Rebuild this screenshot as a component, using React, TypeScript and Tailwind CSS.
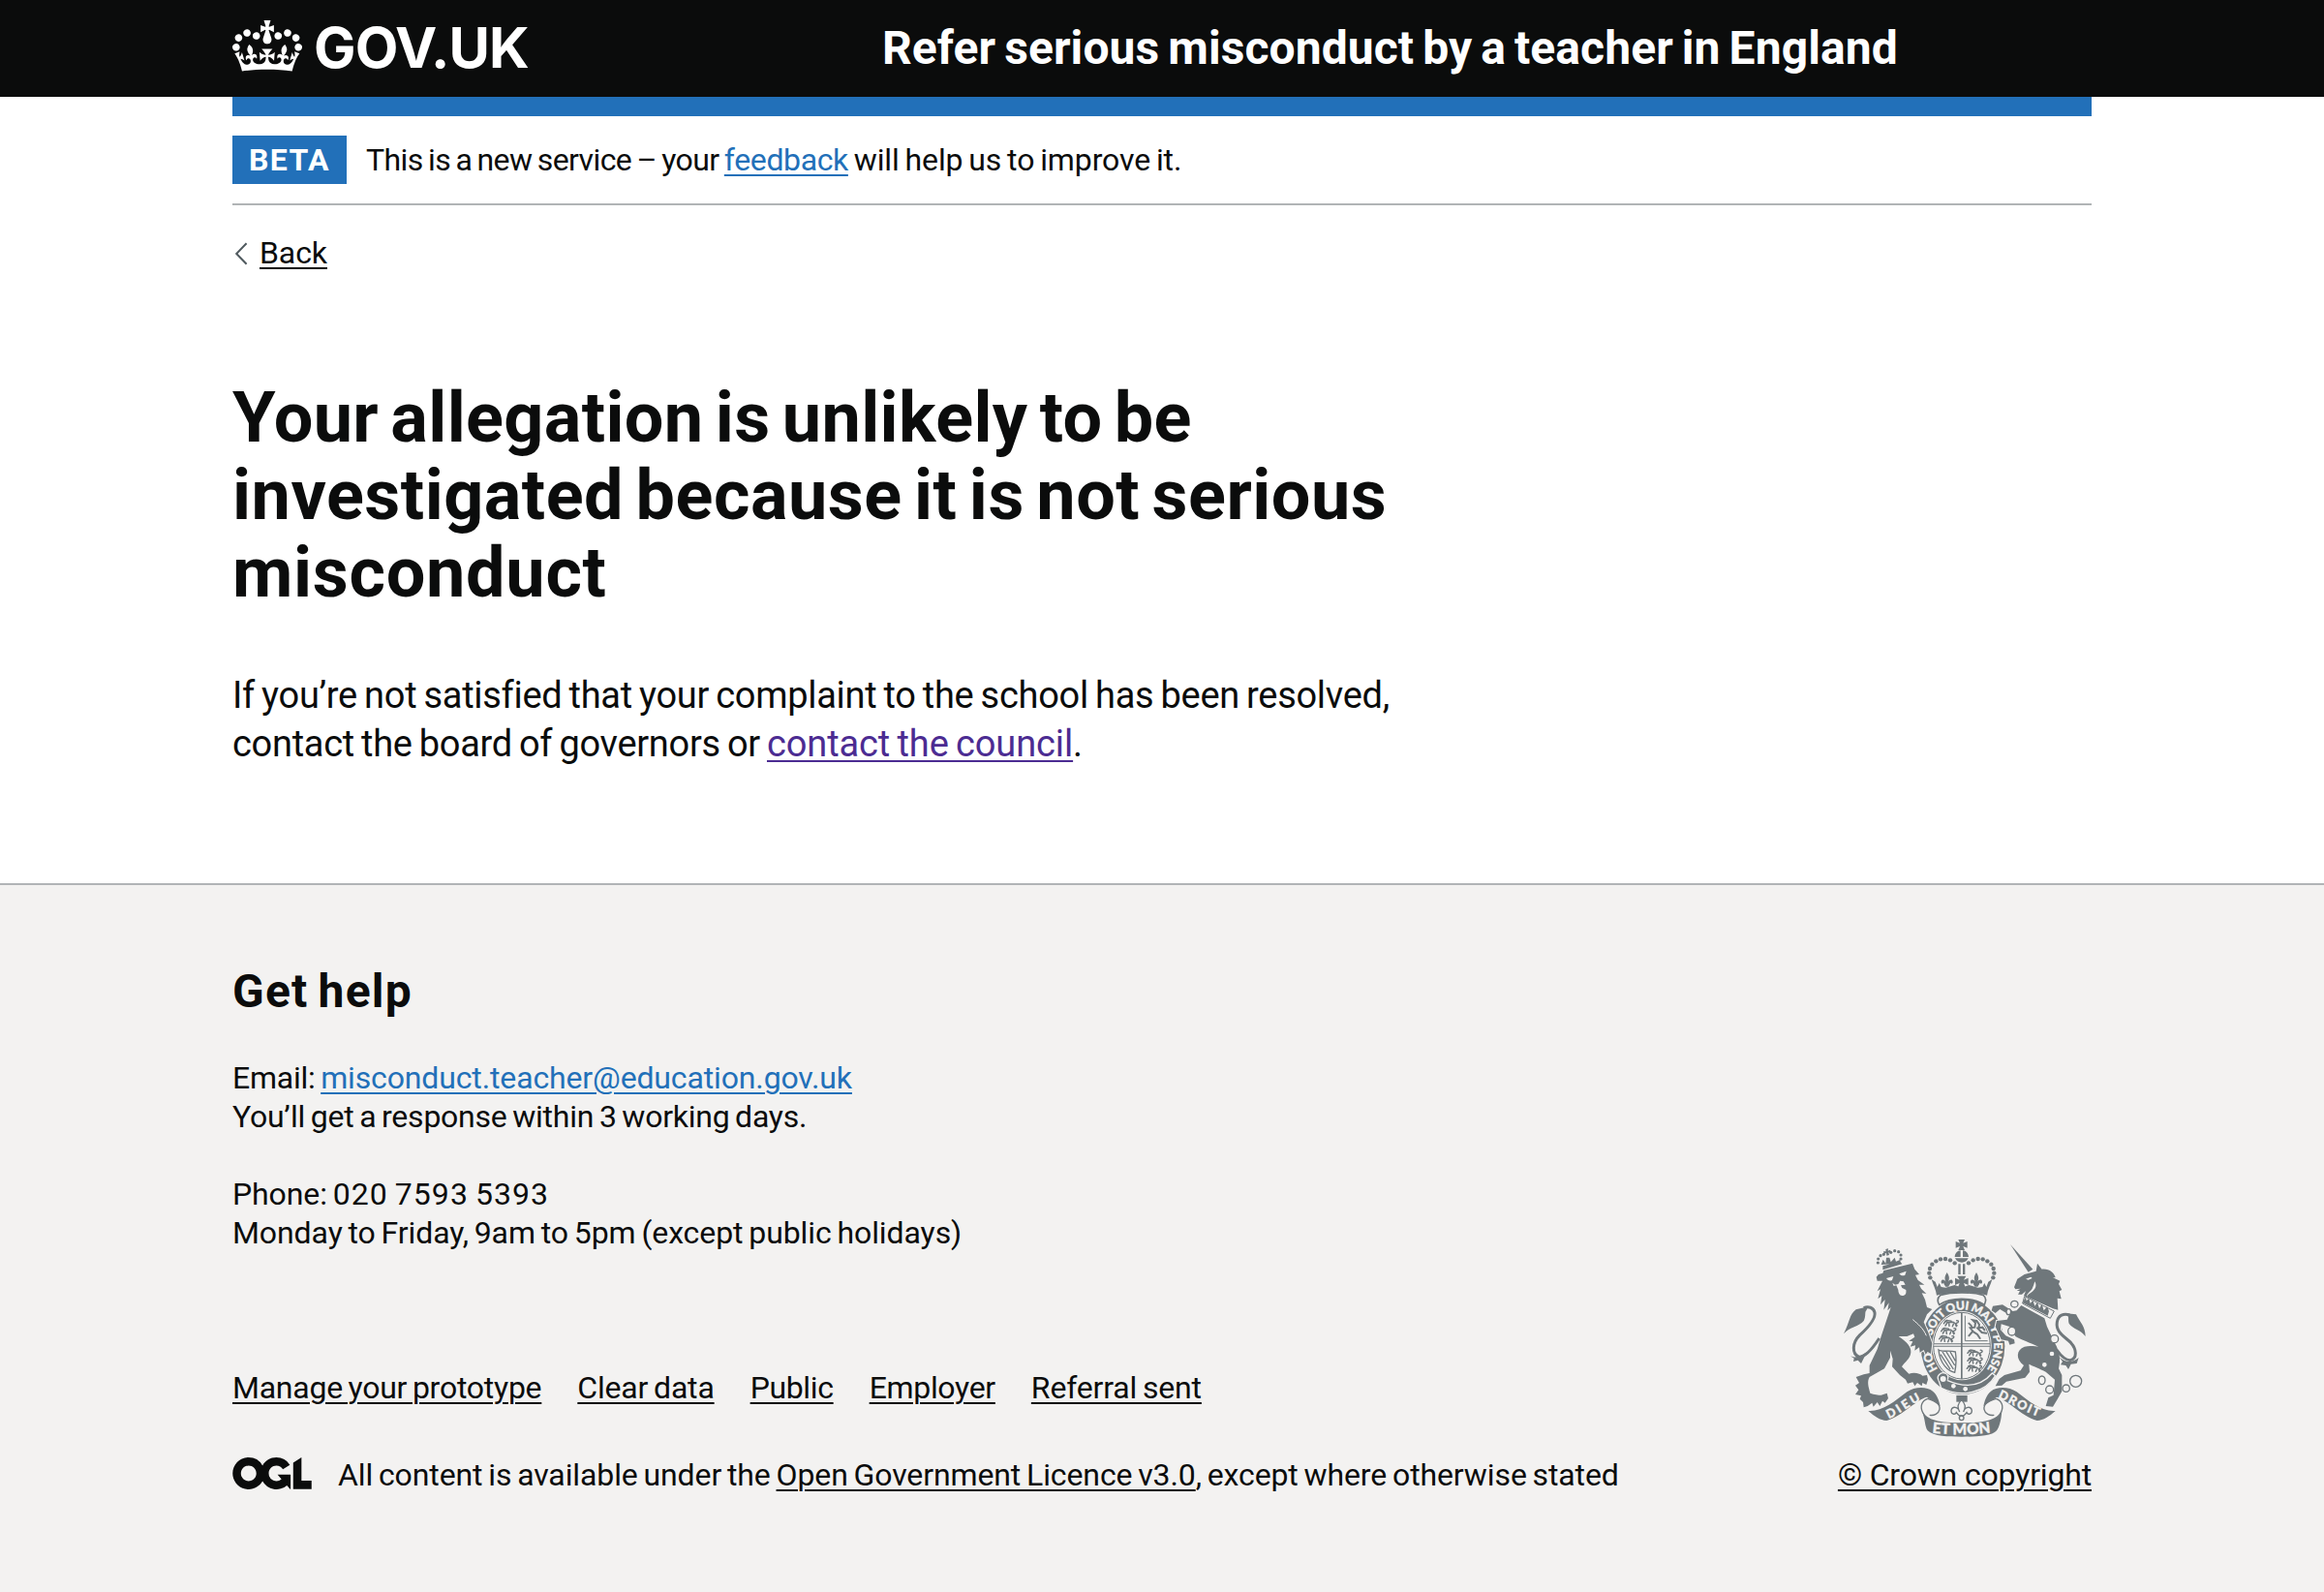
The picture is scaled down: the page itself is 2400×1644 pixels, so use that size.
import type { ReactNode } from "react";

const LINK = "underline decoration-2 underline-offset-4";
const INK = "#6f777b";
const PAPER = "#f3f2f1";

function Crown() {
  return (
    <svg viewBox="0 0 132 97" className="h-[53px] w-[72px] shrink-0" fill="currentColor" aria-hidden="true">
      <path d="M25 30.2c3.5 1.5 7.7-.2 9.1-3.7 1.5-3.6-.2-7.8-3.9-9.2-3.6-1.4-7.6.3-9.1 3.9-1.4 3.5.3 7.5 3.9 9zM9 39.5c3.6 1.5 7.8-.2 9.2-3.7 1.5-3.6-.2-7.8-3.9-9.1-3.6-1.5-7.6.2-9.1 3.8-1.4 3.5.3 7.5 3.8 9zM4.4 57.2c3.5 1.5 7.7-.2 9.1-3.8 1.5-3.6-.2-7.7-3.9-9.1-3.5-1.5-7.6.3-9.1 3.8-1.4 3.5.3 7.6 3.9 9.1zm38.3-21.4c3.5 1.5 7.7-.2 9.1-3.8 1.5-3.6-.2-7.7-3.9-9.1-3.6-1.5-7.6.3-9.1 3.8-1.3 3.6.4 7.7 3.9 9.1zm64.4-5.6c-3.6 1.5-7.8-.2-9.1-3.7-1.5-3.6.2-7.8 3.8-9.2 3.6-1.4 7.7.3 9.2 3.9 1.3 3.5-.4 7.5-3.9 9zm15.9 9.3c-3.6 1.5-7.7-.2-9.1-3.7-1.5-3.6.2-7.8 3.7-9.1 3.6-1.5 7.7.2 9.2 3.8 1.5 3.5-.3 7.5-3.8 9zm4.7 17.7c-3.6 1.5-7.8-.2-9.2-3.8-1.5-3.6.2-7.7 3.9-9.1 3.6-1.5 7.7.3 9.2 3.8 1.3 3.5-.4 7.6-3.9 9.1zM89.3 35.8c-3.6 1.5-7.8-.2-9.2-3.8-1.4-3.6.2-7.7 3.9-9.1 3.6-1.5 7.7.3 9.2 3.8 1.4 3.6-.3 7.7-3.9 9.1zM69.7 17.7l8.9 4.7V9.3l-8.9 2.8c-.2-.3-.5-.6-.9-.9L72.4 0H59.6l3.5 11.2c-.3.3-.6.5-.9.9l-8.8-2.8v13.1l8.8-4.7c.3.3.6.7.9.9l-5 15.4v.1c-.2.8-.4 1.6-.4 2.4 0 4.1 3.1 7.5 7 8.1h.2c.3 0 .7.1 1 .1.4 0 .7 0 1-.1h.2c4-.6 7.1-4.1 7.1-8.1 0-.8-.1-1.7-.4-2.4V34l-5.1-15.4c.4-.2.7-.6 1-.9zM66 92.8c16.9 0 32.8 1.1 47.1 3.2 4-16.9 8.9-26.7 14-33.5l-9.6-3.4c1 4.9 1.1 7.2 0 10.2-1.5-1.4-3-4.3-4.2-8.7L108.6 76c2.8-2 5-3.2 7.5-3.3-4.4 9.4-10 11.9-13.6 11.2-4.3-.8-6.3-4.6-5.6-7.9 1-4.7 5.7-5.9 8-.5 4.3-8.7-3-11.4-7.6-8.8 7.1-7.2 7.9-13.5 2.1-21.1-8 6.1-8.1 12.3-4.5 20.8-4.7-5.4-12.1-2.5-9.5 6.2 3.4-5.2 7.9-2 7.2 3.1-.6 4.3-6.4 7.8-13.5 7.2-10.3-.9-10.9-8-11.2-13.8 2.5-.5 7.1 1.8 11 7.3L80.2 60c-4.1 4.4-8 5.3-12.3 5.4 1.4-4.4 8-11.6 8-11.6H55.5s6.4 7.2 7.9 11.6c-4.2-.1-8-1-12.3-5.4l1.4 16.4c3.9-5.5 8.5-7.7 10.9-7.3-.3 5.8-.9 12.8-11.1 13.8-7.2.6-12.9-2.9-13.5-7.2-.7-5 3.8-8.3 7.1-3.1 2.7-8.7-4.6-11.6-9.4-6.2 3.7-8.5 3.6-14.7-4.6-20.8-5.8 7.6-5 13.9 2.2 21.1-4.7-2.6-11.9.1-7.7 8.8 2.3-5.5 7.1-4.2 8.1.5.7 3.3-1.3 7.1-5.7 7.9-3.5.7-9-1.8-13.5-11.2 2.5.1 4.7 1.3 7.5 3.3l-4.7-15.4c-1.2 4.4-2.7 7.2-4.3 8.7-1.1-3-.9-5.3 0-10.2l-9.5 3.4c5 6.9 9.9 16.7 14 33.5 14.8-2.1 30.8-3.2 47.7-3.2z" />
    </svg>
  );
}

function OglLogo() {
  return (
    <svg viewBox="0 0 483.2 195.7" className="mt-0.5 h-[33px] w-[82px] shrink-0" fill="currentColor" role="img" aria-label="OGL">
      <path d="M421.5 142.8V.1l-50.7 32.3v161.1h112.4v-50.7zm-122.3-9.6A47.12 47.12 0 0 1 221 97.8c0-26 21.1-47.1 47.1-47.1 16.7 0 31.4 8.7 39.7 21.8l42.7-27.2A97.63 97.63 0 0 0 268.1 0c-36.5 0-68.3 20.1-85.1 49.7A98 98 0 0 0 97.8 0C43.9 0 0 43.9 0 97.8s43.9 97.8 97.8 97.8c36.5 0 68.3-20.1 85.1-49.7a97.76 97.76 0 0 0 149.6 25.4l19.4 22.2h3v-87.8h-80l24.3 27.5zM97.8 145c-26 0-47.1-21.1-47.1-47.1s21.1-47.1 47.1-47.1 47.1 21.1 47.1 47.1S123.8 145 97.8 145" />
    </svg>
  );
}

const CROWN_DOTS = [
  [386, 103], [372, 94], [357, 90], [342, 91], [328, 97], [316, 107], [309, 120], [307, 134], [310, 148],
];

function Fleur({ x, y, s = 1 }: { x: number; y: number; s?: number }) {
  return (
    <path
      transform={`translate(${x} ${y}) scale(${s})`}
      d="M0-24C8-12 9-4 4 6 8-2 18-4 19 6 20 12 14 15 11 10 10 16 6 18 5 22H-5C-6 18-10 16-11 10-14 15-20 12-19 6-18-4-8-2-4 6-9-4-8-12 0-24Z"
    />
  );
}

function PassantLion({ x, y }: { x: number; y: number }) {
  return (
    <path
      transform={`translate(${x} ${y})`}
      fill="none"
      stroke={INK}
      strokeWidth="4.4"
      strokeLinecap="round"
      d="M2 10l6-7 7 4 16-1 8 5 4 6M12 9l-5 8M18 10l1 8M32 12l-3 7M38 12l3 7M42 9c8-2 6-9 0-8M6 3l6-3M15 1l10 2"
    />
  );
}

function RibbonHalf() {
  return (
    <>
      <path d="M118 561C160 564 200 532 238 502C262 485 300 485 318 500C332 512 338 530 341 547C330 533 312 528 300 518C270 524 224 576 175 591C154 590 138 578 118 561Z" />
      <path
        fill="none"
        stroke={INK}
        strokeWidth="4"
        d="M302 523C284 530 278 545 286 564C294 582 308 592 326 596M302 523C322 530 342 538 339 556C336 570 322 576 308 574"
      />
    </>
  );
}

function CoatOfArms() {
  return (
    <svg viewBox="42 27 750 612" className="h-[204px] w-[250px] overflow-visible" fill={INK} aria-hidden="true">
      <defs>
        <path id="garter" d="M410 473A98 113 0 0 1 410 247A98 113 0 0 1 410 473" />
        <path id="dieu" d="M181 585C212 573 242 547 292 522" />
        <path id="droit" d="M519 520C560 537 596 563 656 583" />
        <path id="etmon" d="M316 629Q408 640 504 627" />
      </defs>

      {/* imperial crown */}
      <path d="M397 30h20l-5 11 13-5v20l-13-5 5 12h-20l5-12-13 5V36l13 5Z" />
      <path d="M404 64v20h-18C387 72 394 65 404 64ZM411 64v20h18C428 72 421 65 411 64ZM387 88h41c-3 8-11 13-20 13s-18-5-21-13Z" />
      {CROWN_DOTS.map(([x, y]) => (
        <g key={x}>
          <circle cx={x} cy={y} r="6.6" />
          <circle cx={815 - x} cy={y} r="6.6" />
        </g>
      ))}
      <path d="M397 106h7v32h-7zM411 106h7v32h-7z" />
      <path d="M394 143h27l-7 12 14-6v22l-14-6 6 16h-25l6-16-14 6v-22l14 6Z" />
      <Fleur x={362} y={155} s={0.95} />
      <Fleur x={453} y={155} s={0.95} />
      <path d="M314 153l12 8 6 16 6-12 6 12 14 2 28-8 22 8 22-8 28 8 14-2 6-12 6 12 6-16 12-8c-4 16-14 32-16 50-40-12-116-12-156 0-2-18-12-34-16-50Z" />

      {/* garter */}
      <ellipse cx="411" cy="361" rx="130" ry="149" />
      <path d="M342 202C376 192 440 192 474 202C486 212 482 222 478 232C440 208 374 208 338 232C332 222 330 212 342 202Z" fill={PAPER} stroke={INK} strokeWidth="5" />
      <ellipse cx="408" cy="359" rx="92" ry="107" fill={PAPER} />
      <ellipse cx="408" cy="359" rx="88" ry="103" fill="none" stroke={INK} strokeWidth="3" />
      <g fill={PAPER} stroke={PAPER} fontFamily="Lato" fontWeight="900" fontSize="36">
        <text>
          <textPath href="#garter" startOffset="198" textLength="376" lengthAdjust="spacing">SOIT QUI MAL Y PENSE</textPath>
        </text>
        <text>
          <textPath href="#garter" startOffset="90">HO</textPath>
        </text>
      </g>

      {/* shield quarters */}
      <path d="M405 256h5v206h-5zM321 352h174v3H321zM321 359h174v3H321z" />
      <PassantLion x={350} y={280} />
      <PassantLion x={342} y={304} />
      <PassantLion x={336} y={328} />
      <PassantLion x={424} y={372} />
      <PassantLion x={424} y={396} />
      <PassantLion x={422} y={420} />
      <g fill="none" stroke={INK} strokeWidth="4">
        <path d="M418 266v78h70" strokeWidth="3" />
        <path d="M430 328l12-14-8-10 14-2 2-14-8-8 12 2 8 12-2 10 12-2 6 8M444 316l12 8 8 12M456 304l14 14 14 2M430 290l8 8" strokeWidth="6" strokeLinecap="round" />
        <path d="M336 372c10 8 30 0 52 6 4 24 2 44-2 64-20-4-46-26-50-70ZM348 378l34 54M360 378l26 42M372 378l16 28M342 386l30 46" />
      </g>

      {/* garter buckle and strap */}
      <path d="M336 466c-8-14 6-26 20-22 10 4 12 14 6 22 60 26 108 16 140-22l10 8c-30 52-104 70-168 38Z" stroke={PAPER} strokeWidth="4" />
      <circle cx="350" cy="462" r="11" fill={PAPER} stroke={INK} strokeWidth="4" />
      <circle cx="382" cy="484" r="7" fill={PAPER} />
      <circle cx="419" cy="493" r="7" fill={PAPER} />

      {/* lion */}
      <path stroke={PAPER} strokeWidth="6" paintOrder="stroke" d="M143 146L150 138L163 134L166 126L255 104L262 122L276 138L264 140L272 156L292 170L276 170L282 182L298 198L284 196L294 216L300 240L316 246L300 262L290 286L304 318L316 352L312 384L302 378L296 386L290 372L278 380L276 364L262 374L264 358L248 362L256 346L244 344L262 332L258 322L238 330L212 330C236 346 252 362 250 380C248 400 232 408 222 424L244 446C262 440 280 446 286 452L300 450L303 464L298 480L286 474L284 484L270 474L262 484L256 472L240 476L234 464L216 450L192 424L194 400L186 374L186 396L168 430L122 456C114 470 118 484 124 506C136 510 150 512 158 512L176 506L180 522L170 536L162 530L154 546L146 534L134 548L130 536L116 546L104 550L102 534L92 524L96 514L78 510L88 496L78 482L90 474L80 456L104 448L122 444L122 420L146 370L158 330L188 240L178 250L182 226L166 248L170 216L156 232L160 204L148 214L156 184L146 190L162 158L146 158Z" />
      <path fill={PAPER} d="M174 150l22-6-4 12c-8 4-14 0-18-6ZM214 136l22-8-4 12c-6 4-14 2-18-4ZM193 164l8 6 10-2 6-10 10 2 6 10-14 2 4 8 12 6c2 14-4 18-12 18s-12-10-12-18l-6-14-8 2Z" />
      <path fill="none" stroke={PAPER} strokeWidth="3" d="M256 278c16 14 32 26 42 50" />
      <path d="M163 112l54-14 6 8-60 18ZM158 108l6-16 8 12 2-18h10l4 14 12-14 4 12 14-6-2 12Z" />
      {[[148, 102], [149, 90], [156, 80], [166, 76], [188, 70], [200, 65], [212, 68], [219, 78], [219, 90]].map(([x, y]) => (
        <circle key={`${x}-${y}`} cx={x} cy={y} r="4.8" />
      ))}
      <path d="M172 60l8-2-1 7 7-3 2 8-7 0 2 8-8 2-1-8-7 3-2-8 8 0Z" />
      <path fill="none" stroke={INK} strokeWidth="9" d="M152 336C130 370 110 394 90 394C66 384 68 350 92 326C118 302 142 276 138 256C134 240 118 236 104 242" />
      <path d="M118 238L80 247C58 264 62 284 42 322C60 300 90 300 104 282C112 268 106 256 112 250ZM58 388C75 400 90 394 114 378L96 414L86 404L72 408L74 398Z" />

      {/* unicorn */}
      <path d="M558 45L628 122L614 131Z" />
      <path d="M570 178L580 152L602 138L638 128L642 104L656 122C680 120 694 134 698 148L690 148L712 158L708 168L718 186L710 190L716 214L704 212L706 248L690 244L600 204L606 190L594 200L582 200L588 190L578 188L590 182L574 184Z" />
      <path fill={PAPER} d="M606 152l16-6 4 4-12 5ZM634 160c8 14 2 28-20 40l-4 6c-2-8 10-14 16-24 4-8 6-16 8-22Z" />
      <path fill={PAPER} stroke={INK} strokeWidth="3" d="M602 206L596 228L682 274L694 252Z" />
      <path d="M606 208l2 12 8-8 4 16 8-10 6 18 8-12 6 20 8-14 6 20 10-12 6 14-4 14-78-40Z" />
      <path stroke={PAPER} strokeWidth="6" paintOrder="stroke" d="M592 234L664 274L672 300L696 350C712 380 714 400 708 430L718 450L718 500L704 525L690 548L668 546L676 520L692 512L696 464L668 440C650 430 628 422 616 416L618 440L604 458L546 470L532 482L512 484L524 462L540 450L590 436L600 420C574 400 576 372 602 362C620 358 640 362 646 362C620 350 590 340 574 330L556 300L530 292L528 310L544 328L570 340L572 352L556 356L552 344L530 340L512 300L516 282L548 278L556 262L542 256L526 246L512 258L500 250L504 236L534 232L566 252L578 250Z" />
      <g fill={PAPER} stroke={INK} strokeWidth="4">
        <ellipse cx="571" cy="230" rx="11" ry="10" />
        <ellipse cx="553" cy="254" rx="7" ry="9" />
        <ellipse cx="563" cy="314" rx="12" ry="13" />
        <circle cx="695" cy="338" r="12" />
        <circle cx="687" cy="384" r="9" />
        <circle cx="664" cy="418" r="9" />
        <ellipse cx="656" cy="466" rx="10" ry="13" />
        <circle cx="680" cy="495" r="12" />
        <circle cx="731" cy="491" r="11" />
        <circle cx="761" cy="469" r="18" />
      </g>
      <path fill="none" stroke={INK} strokeWidth="9" d="M702 372C716 392 728 404 744 404C766 398 764 370 746 350C726 330 698 318 703 286C706 264 724 258 742 264" />
      <path d="M732 259L762 262C776 290 790 298 791 330C776 308 752 308 740 290C736 278 742 272 732 259ZM708 392C730 414 750 412 770 396L764 414L746 416L738 432L730 420L714 418L720 408Z" />

      {/* motto ribbon */}
      <RibbonHalf />
      <g transform="translate(816 0) scale(-1 1)">
        <RibbonHalf />
      </g>
      <path d="M284 560C300 590 340 598 408 598C476 598 516 590 532 560C530 590 524 610 516 622C500 640 450 641 408 641C366 641 320 640 302 622C292 606 296 590 284 560Z" />
      <g fill={PAPER} stroke={PAPER} fontFamily="Lato" fontWeight="900">
        <text fontSize="38"><textPath href="#dieu" textLength="116">DIEU</textPath></text>
        <text fontSize="38"><textPath href="#droit" textLength="138">DROIT</textPath></text>
        <text fontSize="46"><textPath href="#etmon" textLength="182">ET MON</textPath></text>
      </g>

      {/* badge under the shield */}
      <path d="M391 513h34v20h-34z" />
      <g fill={PAPER} stroke={INK} strokeWidth="4">
        <path d="M407 526c12 14 14 22 6 38 4-16 24-20 26-4 0 12-12 14-16 6-4 6-8 8-10 10h-12c-2-2-6-4-10-10-4 8-16 6-16-6 2-16 22-12 26 4-8-16-6-24 6-38Z" />
        <circle cx="407" cy="583" r="7" />
      </g>
    </svg>
  );
}

function FooterLink({ children, className }: { children: ReactNode; className: string }) {
  return (
    <li>
      <a href="#" className={`${LINK} ${className}`}>{children}</a>
    </li>
  );
}

export default function App() {
  return (
    <div className="flex min-h-[1644px] flex-col bg-white font-[Roboto,'Liberation_Sans',sans-serif] text-[32px]/[40px] text-[#0b0c0c] [word-spacing:-2px]">
      <header className="h-[100px] bg-[#0b0c0c] text-white">
        <div className="mx-auto flex w-[1920px]">
          <a href="#" className="flex w-[671px] items-start pt-[21px]">
            <Crown />
            <span className="ml-3 mt-[-2px] font-[Inter,sans-serif] text-[58px]/[60px] font-bold tracking-[-0.9px]">GOV.UK</span>
          </a>
          <a href="#" className="pt-5 text-[48px]/[60px] font-bold tracking-[0.08px] [word-spacing:-3px]">
            Refer serious misconduct by a teacher in England
          </a>
        </div>
      </header>

      <div className="mx-auto w-[1920px]">
        <div className="h-5 bg-[#2270b9]" />
        <div className="flex border-b-2 border-[#b1b4b6] pt-5 pb-5">
          <strong className="flex h-[50px] w-[118px] items-center justify-center bg-[#2270b9] font-bold tracking-[1.4px] text-white">BETA</strong>
          <p className="ml-5 mt-[5px] whitespace-pre">
            <span className="tracking-[-0.6px]">This is a new service – your </span>
            <a href="#" className={`${LINK} tracking-[-0.38px] text-[#2270b9]`}>feedback</a>
            <span className="tracking-[-0.1px]"> will help us to improve it.</span>
          </p>
        </div>
        <a href="#" className="mt-[29px] flex w-fit items-center">
          <svg viewBox="0 0 14 24" className="ml-0.5 mt-0.5 h-6 w-3.5" fill="none" stroke="#505a5f" strokeWidth="2">
            <path d="M12.6 1.2L2.2 12l10.4 10.8" />
          </svg>
          <span className={`${LINK} ml-3 tracking-[-0.08px]`}>Back</span>
        </a>

        <main className="h-[631px] w-[1260px] pt-[111px]">
          <h1 className="text-[72px]/[80px] font-bold [word-spacing:-6px]">
            <span className="tracking-[0.36px]">Your allegation is unlikely to be</span>
            <br />
            <span className="tracking-[0.5px]">investigated because it is not serious</span>
            <br />
            <span className="tracking-[0.7px]">misconduct</span>
          </h1>
          <p className="mt-[61px] text-[38px]/[50px]">
            <span className="tracking-[-0.29px]">If you’re not satisfied that your complaint to the school has been resolved,</span>
            <br />
            <span className="tracking-[-0.3px]">contact the board of governors or </span>
            <a href="#" className={`${LINK} tracking-[-0.11px] text-[#4c2c92]`}>contact the council</a>.
          </p>
        </main>
      </div>

      <footer className="flex-1 border-t-2 border-[#b1b4b6] bg-[#f3f2f1] pt-20">
        <div className="mx-auto flex w-[1920px] items-end justify-between">
          <div>
            <h2 className="text-[48px]/[60px] font-bold tracking-[1.2px] [word-spacing:-3px]">Get help</h2>
            <p className="mt-[39px]">
              <span className="tracking-[-0.25px]">Email: </span>
              <a href="#" className={`${LINK} tracking-[-0.14px] text-[#2270b9]`}>misconduct.teacher@education.gov.uk</a>
              <br />
              <span className="tracking-[-0.24px]">You’ll get a response within 3 working days.</span>
            </p>
            <p className="mt-10">
              <span className="tracking-[-0.1px]">Phone: </span>
              <span className="tracking-[1.05px]">020 7593 5393</span>
              <br />
              <span className="tracking-[-0.09px]">Monday to Friday, 9am to 5pm (except public holidays)</span>
            </p>
            <ul className="mt-[120px] flex gap-[37px]">
              <FooterLink className="tracking-[-0.25px]">Manage your prototype</FooterLink>
              <FooterLink className="tracking-[-0.18px]">Clear data</FooterLink>
              <FooterLink className="tracking-[-0.35px]">Public</FooterLink>
              <FooterLink className="tracking-[-0.32px]">Employer</FooterLink>
              <FooterLink className="tracking-[-0.17px]">Referral sent</FooterLink>
            </ul>
            <div className="mt-[50px] flex">
              <OglLogo />
              <p className="ml-[27px] whitespace-pre tracking-[-0.11px]">
                All content is available under the <a href="#" className={LINK}>Open Government Licence v3.0</a>, except where otherwise stated
              </p>
            </div>
          </div>
          <div className="flex flex-col items-center">
            <CoatOfArms />
            <a href="#" className={`${LINK} mt-5 tracking-[-0.17px] [word-spacing:0px]`}>© Crown copyright</a>
          </div>
        </div>
      </footer>
    </div>
  );
}
